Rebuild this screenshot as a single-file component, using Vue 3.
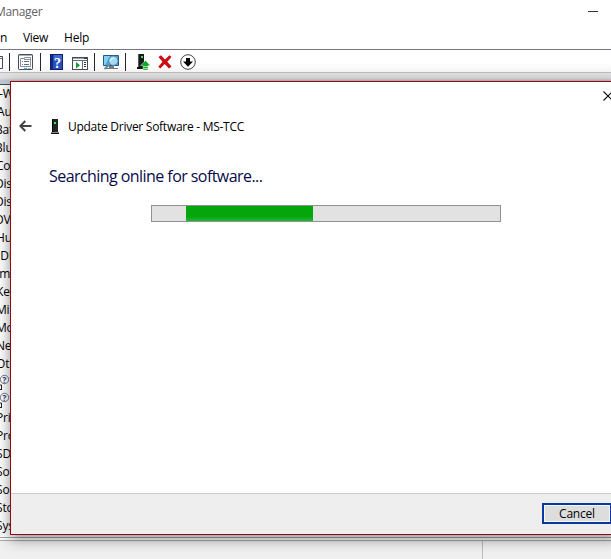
<script setup>
const rows = [
  ['-W', -1], ['Au', -3], ['Bat', -5], ['Blu', -5], ['Co', -4], ['Dis', -5], ['Dis', -5],
  ['DV', -5], ['Hu', -4], ['IDE', -3], ['Im', -4], ['Key', -4], ['Mi', -4], ['Mo', -4],
  ['Ne', -4], ['Ot', -4], ['?', 0], ['?', 0], ['Pri', -4], ['Pro', -4], ['SD', -4],
  ['Sof', -4], ['So', -4], ['Sto', -4], ['Sys', -4],
].map(([text, shift]) => ({ text, shift }))
</script>

<template>
  <div class="desktop">
    <header class="title">
      <span class="caption">Manager</span>
      <span class="minimize"></span>
    </header>
    <nav class="menu">
      <span class="m-action">n</span><span class="m-view">View</span><span class="m-help">Help</span>
    </nav>
    <div class="toolbar">
      <svg width="210" height="22" viewBox="0 50 210 22">
        <path d="M0 56.5H2.500V68.500H0" fill="#fff" stroke="#454b55" />
        <path d="M0 58.500H2" stroke="#6c7480" />
        <path d="M9.500 53V71M40.500 53V71M94.500 53V71M125.500 53V71" stroke="#25272b" />
        <g>
          <rect x="18.500" y="54.500" width="14" height="15" rx=".7" fill="#fff" stroke="#464d59" />
          <path d="M19 55.500H32" stroke="#a9b0b8" />
          <path d="M20.500 59.500V58.500H24.500V57.500H30.500V66.500H20.500Z" fill="#fff" stroke="#85909c" />
          <path d="M24 59.500H30" stroke="#85909c" />
          <path d="M22 61.500H23M22 64.500H23" stroke="#4883c2" />
          <path d="M24 61.500H29M24 64.500H29" stroke="#646d78" />
          <path d="M24 68.500H27" stroke="#28b9ef" stroke-width="1.300" /><path d="M28 68.500H31" stroke="#aeb3b8" />
        </g>
        <g>
          <rect x="50.500" y="54.500" width="12" height="15" fill="#284fbd" stroke="#101d6c" />
          <path d="M51 55H53V69H51Z" fill="#14277f" />
          <path d="M54 55H62V61H54Z" fill="#3f68d4" />
          <text x="54" y="67.500" class="question">?</text>
        </g>
        <g>
          <rect x="72.500" y="57.500" width="15" height="12" fill="#fff" stroke="#454c56" />
          <path d="M73 60.500H87M82.500 61V69" stroke="#646c78" />
          <path d="M73 58.500H84" stroke="#9ba2ab" /><path d="M84 58.500H87" stroke="#343a44" />
          <path d="M76 62L80 65.200L76 68.500Z" fill="#139b27" />
          <path d="M84 62.500H86M84 64.500H86M84 66.500H86" stroke="#333" />
        </g>
        <g>
          <path d="M103.500 55.500H118.500V65.500H103.500Z" fill="#45a9e0" stroke="#245a82" />
          <path d="M104 56H110L105 65H104Z" fill="#82d1f2" />
          <path d="M109 66H114V68H118V69H105V68H109Z" fill="#717b83" />
          <path d="M110 64L104.500 69" stroke="#718797" stroke-width="2" />
          <circle cx="113.300" cy="60.700" r="4.700" fill="#a5dbf4" stroke="#4d819f" />
          <path d="M110.500 61Q111 58 114 58" fill="none" stroke="#e6f8ff" />
        </g>
        <g>
          <path d="M138 54H144V67H138Z" fill="#171b1b" />
          <path d="M138 54H139V67H138Z" fill="#556" />
          <path d="M137 67H145V69H137Z" fill="#111" />
          <path d="M141 56H143V58H141Z" fill="#36ee52" />
          <path d="M145.500 60.500L150.500 65.500H148V70H143V65.500H140.500Z" fill="#16a62b" stroke="#fff" stroke-width=".4" />
          <path d="M143 66.500H148M143 68.500H148" stroke="#c2edc6" stroke-width=".8" />
        </g>
        <path d="M158.500 57L161 55.200L165 59.600L169.500 55.300L171.500 57L167.300 61.700L171.500 66.500L169 68.500L164.700 64L160.300 68.600L158.300 66.700L162.500 61.800Z" fill="#c90d12" />
        <circle cx="188" cy="62" r="7.300" fill="#fff" stroke="#444" />
        <path d="M186 58H190V61.500H193L188 66.800L183 61.500H186Z" fill="#050505" />
      </svg>
    </div>
    <div class="band"></div>
    <main class="tree">
      <div v-for="(row, i) in rows" :key="i" class="row">
        <svg v-if="row.text === '?'" class="unknown" width="10" height="18" viewBox="0 0 10 18">
          <path d="M0 12H1.500V17M0 16.500H2" fill="none" stroke="#222" />
          <circle cx="4.500" cy="6.500" r="4.200" fill="#fff" stroke="#697083" stroke-width=".9" />
          <text x="2.500" y="9.500" class="small-question">?</text>
        </svg>
        <span v-else :style="{ marginLeft: row.shift + 'px' }">{{ row.text }}</span>
      </div>
    </main>
    <footer class="status"><span></span><span></span></footer>

    <section class="dialog">
      <svg class="close" width="10" height="10" viewBox="0 0 10 10"><path d="M.5.5L9.500 9.500M9.500.5L.5 9.500" stroke="#111" stroke-width="1.100" /></svg>
      <div class="heading">
        <svg class="back" width="13" height="12" viewBox="0 0 13 12"><path d="M12.500 6H1.500M6.300 1L1.300 6L6.300 11" fill="none" stroke="#444" stroke-width="2" /></svg>
        <svg class="device" width="8" height="15" viewBox="0 0 8 15"><path d="M1 0H7V13H1Z" fill="#202525" /><path d="M1 0H2V13H1Z" fill="#050707" /><path d="M0 13.500H8V15H0Z" fill="#111" /><path d="M3 3H5V5H3Z" fill="#37ed50" /></svg>
        <span class="dialog-title">Update Driver Software - MS-TCC</span>
      </div>
      <h1>Searching online for software...</h1>
      <div class="progress"><div class="fill"></div></div>
      <div class="actions"><button>Cancel</button></div>
    </section>
  </div>
</template>

<style>
body { margin: 0; overflow: hidden; }
</style>

<style scoped>
* { box-sizing: border-box; }
.desktop { position: relative; width: 611px; height: 559px; overflow: hidden; display: flex; flex-direction: column; background: #fff; color: #000; font: 12px/18px "Open Sans", "Noto Sans", sans-serif; }
.title { display: flex; height: 26px; padding: 3px 13px 0 0; justify-content: space-between; color: #626262; }
.caption { margin-left: -5px; letter-spacing: -.35px; }
.minimize { width: 10px; height: 1px; margin-top: 8px; background: #333; }
.menu { display: flex; height: 23px; padding-top: 3px; }
.m-action { width: 23px; }
.m-view { width: 41px; letter-spacing: -.3px; }
.m-help { letter-spacing: -.2px; }
.toolbar { height: 24px; flex: none; border-top: 1px solid #747482; border-bottom: 1px solid #bcbcbc; background: linear-gradient(#fff 60%, #f5f5f5); }
.toolbar svg { display: block; }
.question { font: bold 14px "Liberation Serif", serif; fill: #fff; }
.band { height: 11px; flex: none; background: linear-gradient(#e1e1e1 0 2px, #dcdcdc 6px, #bcc6d1 7px, #c3cdd7 10px); }
.tree { height: 454px; flex: none; border-top: 1px solid #444b55; border-bottom: 1px solid #a5a5a5; }
.row { height: 18px; overflow: hidden; white-space: nowrap; letter-spacing: -.2px; }
.unknown { display: block; }
.small-question { font: bold 8px "Open Sans", sans-serif; fill: #273a78; }
.status { display: flex; flex: 1; margin-top: 2px; border-top: 1px solid #aaa; background: #f0f0f0; }
.status span:first-child { width: 483px; border-right: 1px solid #bcbcbc; }
.dialog { position: absolute; left: 10px; top: 81px; width: 608px; height: 454px; display: flex; flex-direction: column; border: 1px solid #96080e; background: #fff; box-shadow: 0 4px 13px rgba(0,0,0,.45); }
.close { margin: 9px 0 0 592px; flex: none; }
.heading { display: flex; align-items: center; height: 20px; margin-top: 16px; padding-left: 8px; }
.back { margin-top: -2px; }
.device { margin-left: 19px; margin-top: -1px; }
.dialog-title { margin-left: 9px; white-space: nowrap; letter-spacing: -.27px; }
h1 { height: 24px; margin: 27px 0 0 38px; font-size: 16px; line-height: 24px; font-weight: 400; color: #070c48; letter-spacing: -.56px; white-space: nowrap; }
.progress { width: 350px; height: 17px; flex: none; margin: 17px 0 0 140px; padding-left: 34px; border: 1px solid #929292; background: #e2e2e2; }
.fill { width: 127px; height: 15px; background: linear-gradient(#05a60c 70%, #1db832); }
.actions { height: 41px; margin-top: auto; display: flex; justify-content: flex-end; padding: 9px 5px 0 0; border-top: 1px solid #ccc; background: #eee; }
button { width: 70px; height: 21px; padding: 0; border: 2px solid #0638a0; box-shadow: inset 0 0 0 1px #f5f8fa; background: #ddd; color: #000; font: 12px/16px "Open Sans", sans-serif; letter-spacing: -.2px; }
</style>
